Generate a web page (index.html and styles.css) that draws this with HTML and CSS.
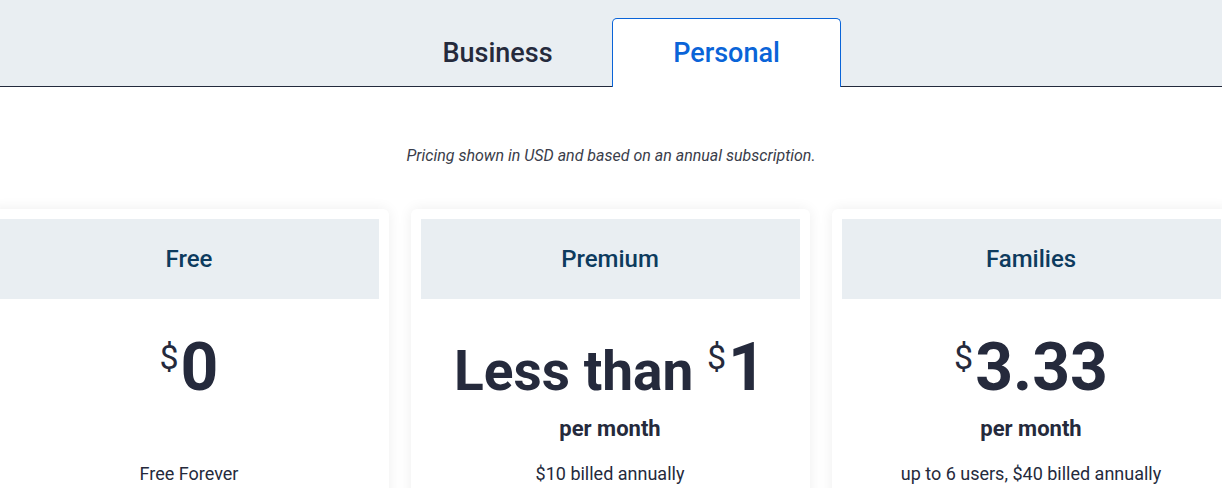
FILE: index.html
```html
<!DOCTYPE html>
<html lang="en">
<head>
<meta charset="utf-8">
<title>Pricing</title>
<link rel="stylesheet" href="styles.css">
</head>
<body>
<div class="tabbar">
  <div class="tabs">
    <div class="tab">Business</div>
    <div class="tab active">Personal</div>
  </div>
</div>
<main class="main">
  <p class="note">Pricing shown in USD and based on an annual subscription.</p>
  <div class="cards">
    <section class="card">
      <h2 class="card-head">Free</h2>
      <div class="price"><span class="cur">$</span><span class="amount">0</span></div>
      <div class="period"></div>
      <div class="billing">Free Forever</div>
    </section>
    <section class="card">
      <h2 class="card-head">Premium</h2>
      <div class="price"><span class="lead">Less than </span><span class="cur">$</span><span class="amount">1</span></div>
      <div class="period">per month</div>
      <div class="billing">$10 billed annually</div>
    </section>
    <section class="card">
      <h2 class="card-head">Families</h2>
      <div class="price"><span class="cur">$</span><span class="amount">3.33</span></div>
      <div class="period">per month</div>
      <div class="billing">up to 6 users, $40 billed annually</div>
    </section>
  </div>
</main>
</body>
</html>
```
FILE: styles.css
```css
* { box-sizing: border-box; }
html, body {
  margin: 0;
  padding: 0;
  background: #ffffff;
  overflow: hidden;
}
body {
  font-family: Roboto, "Liberation Sans", Arial, sans-serif;
  color: #252a3c;
  width: 1222px;
  height: 488px;
}
.tabbar {
  height: 87px;
  background: #e9eef2;
  border-bottom: 1px solid #232a3c;
  padding-top: 18px;
}
.tabs {
  display: flex;
  justify-content: center;
  height: 69px;
  padding-left: 2px;
}
.tab {
  width: 229px;
  height: 69px;
  display: flex;
  align-items: center;
  justify-content: center;
  font-size: 27px;
  font-weight: 500;
  color: #252a3c;
  border: 1px solid transparent;
  border-bottom: none;
  border-radius: 5px 5px 0 0;
  padding-bottom: 1px;
}
.tab.active {
  background: #ffffff;
  border-color: #0a64d8;
  color: #0a64d8;
}
.main {
  padding-top: 60px;
}
.note {
  margin: 0;
  text-align: center;
  font-size: 16px;
  font-style: italic;
  line-height: 18px;
  color: #3a3d4a;
}
.cards {
  display: flex;
  justify-content: center;
  gap: 22px;
  margin-top: 44px;
  padding-right: 2px;
}
.card {
  flex: 0 0 399px;
  width: 399px;
  height: 320px;
  background: #ffffff;
  border-radius: 6px;
  box-shadow: 0 0 14px rgba(0, 0, 0, 0.07);
  padding: 10px;
  text-align: center;
}
.card-head {
  margin: 0;
  height: 80px;
  background: #e9eef2;
  display: flex;
  align-items: center;
  justify-content: center;
  font-size: 24px;
  font-weight: 500;
  color: #0d3b5e;
}
.price {
  margin-top: 34px;
  height: 70px;
  line-height: 70px;
  font-weight: 700;
  white-space: nowrap;
}
.amount {
  font-size: 66px;
}
.lead {
  font-size: 55px;
}
.cur {
  font-size: 34px;
  font-weight: 400;
  vertical-align: top;
  line-height: 1;
  position: relative;
  top: 7px;
  margin-right: 2px;
}
.period {
  height: 30px;
  margin-top: 11px;
  font-size: 22px;
  font-weight: 700;
  line-height: 30px;
}
.billing {
  margin-top: 19px;
  font-size: 18px;
  line-height: 22px;
  color: #252a3c;
}
```
